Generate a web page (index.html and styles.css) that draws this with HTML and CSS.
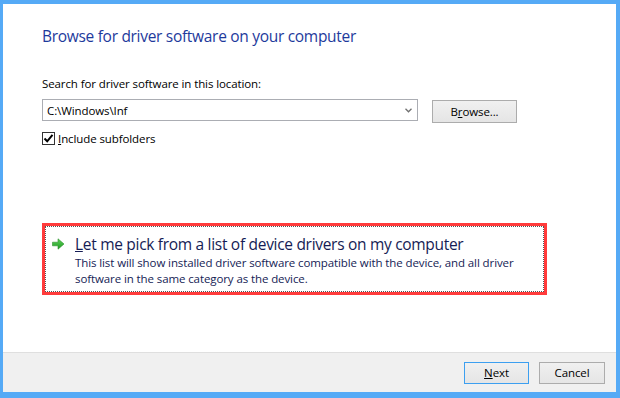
FILE: index.html
```html
<!DOCTYPE html>
<html lang="en">
<head>
    <meta charset="UTF-8">
    <title>Update Driver Software</title>
    <link rel="stylesheet" href="styles.css">
</head>
<body>

<div class="window">
    <!-- Main page -->
    <div class="content">
        <h1 class="page-title">Browse for driver software on your computer</h1>

        <label class="field-label" for="location">Search for driver software in this location:</label>
        <div class="location-row">
            <div class="combo" id="location">
                <span class="combo-text">C:\Windows\Inf</span>
                <svg class="combo-arrow" width="7" height="5" viewBox="0 0 7 5">
                    <path d="M0.5 0.8 L3.5 3.8 L6.5 0.8" fill="none" stroke="#707070" stroke-width="1.3"/>
                </svg>
            </div>
            <button class="btn">B<u>r</u>owse...</button>
        </div>

        <div class="check-row">
            <span class="checkbox">
                <svg width="11" height="11" viewBox="0 0 11 11">
                    <path d="M1.5 5.5 L4.2 8.3 L9.5 1.8" fill="none" stroke="#000" stroke-width="2"/>
                </svg>
            </span>
            <span class="check-label"><u>I</u>nclude subfolders</span>
        </div>

        <!-- Command link -->
        <div class="command-link">
            <div class="command-inner">
                <svg class="command-arrow" width="13" height="12" viewBox="0 0 13 12">
                    <defs>
                        <linearGradient id="g" x1="0" y1="0" x2="0" y2="1">
                            <stop offset="0" stop-color="#5fd35a"/>
                            <stop offset="1" stop-color="#1f9a23"/>
                        </linearGradient>
                    </defs>
                    <path d="M0.5 4.2 H6 V0.8 L12 6 L6 11.2 V7.8 H0.5 Z" fill="url(#g)" stroke="#2b8f2b" stroke-width="0.6"/>
                </svg>
                <div class="command-text">
                    <div class="command-title"><u>L</u>et me pick from a list of device drivers on my computer</div>
                    <div class="command-desc">This list will show installed driver software compatible with the device, and all driver software in the same category as the device.</div>
                </div>
            </div>
        </div>
    </div>

    <!-- Footer buttons -->
    <div class="footer">
        <button class="btn btn-default"><u>N</u>ext</button>
        <button class="btn">Cancel</button>
    </div>
</div>

</body>
</html>
```

FILE: styles.css
```css
* {
    margin: 0;
    padding: 0;
    box-sizing: border-box;
}

body {
    background-color: #55aaf6;
    font-family: 'Open Sans', 'Noto Sans', sans-serif;
    font-size: 11.5px;
    letter-spacing: -0.1px;
    color: #000;
    width: 620px;
    height: 398px;
    overflow: hidden;
}

.window {
    margin: 4px 4px 6px 3px;
    height: 388px;
    background: #fff;
    display: flex;
    flex-direction: column;
}

.content {
    flex: 1;
    padding: 22px 0 0 39px;
}

.page-title {
    font-size: 15.5px;
    letter-spacing: -0.3px;
    font-weight: normal;
    color: #1e3a9c;
    line-height: 20px;
    margin-bottom: 30px;
}

.field-label {
    display: block;
    line-height: 16px;
    margin-bottom: 7px;
}

/* Combo and browse button */
.location-row {
    display: flex;
    align-items: flex-start;
    gap: 14px;
}

.combo {
    width: 376px;
    height: 22px;
    border: 1px solid #abadb3;
    display: flex;
    align-items: center;
    justify-content: space-between;
    padding: 0 5px 0 4px;
}

.combo-arrow {
    margin-top: 1px;
}

.btn {
    font-family: inherit;
    font-size: 11.5px;
    letter-spacing: -0.1px;
    color: #000;
    width: 85px;
    height: 23px;
    border: 1px solid #acacac;
    background: linear-gradient(#f0f0f0, #e5e5e5);
    margin-top: 1px;
}

.btn-default {
    border-color: #3c9ff0;
}

.check-row {
    display: flex;
    align-items: center;
    gap: 3px;
    margin-top: 8px;
}

.checkbox {
    width: 13px;
    height: 13px;
    border: 1px solid #333;
    background: #fff;
    display: flex;
    align-items: center;
    justify-content: center;
}

/* Command link with red highlight */
.command-link {
    position: relative;
    margin-top: 77px;
    width: 505px;
    height: 72px;
    border: 3px solid #ff3b3b;
}

.command-link::before {
    content: "";
    position: absolute;
    top: -6px;
    left: -1px;
    right: -4px;
    bottom: 2px;
    border: 1px solid #d4ecfb;
    border-radius: 3px;
    z-index: -1;
}

.command-inner {
    height: 100%;
    border: 1px dotted #555;
    display: flex;
    align-items: flex-start;
    padding: 6px 0 0 6px;
    gap: 10px;
}

.command-arrow {
    margin-top: 5px;
    flex-shrink: 0;
}

.command-title {
    font-size: 15.5px;
    letter-spacing: -0.3px;
    line-height: 22px;
    color: #151c55;
}

.command-desc {
    color: #151c55;
    line-height: 16px;
    width: 455px;
}

.footer {
    height: 40px;
    background: #f0f0f0;
    border-top: 1px solid #dfdfdf;
    display: flex;
    justify-content: flex-end;
    align-items: center;
    gap: 10px;
    padding-right: 11px;
}

.footer .btn {
    width: 66px;
    height: 22px;
    margin-top: 0;
}

.footer .btn-default {
    width: 65px;
}
```
